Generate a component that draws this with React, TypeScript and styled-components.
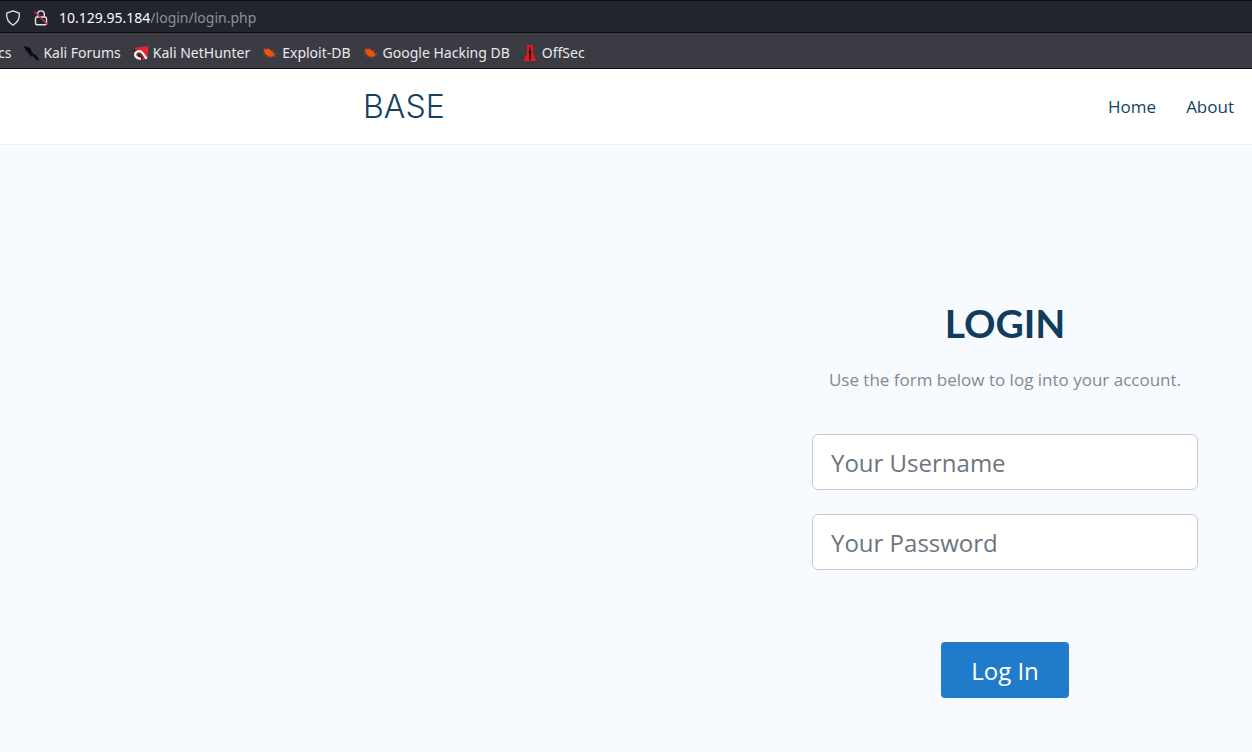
import React from 'react';
import styled, { createGlobalStyle } from 'styled-components';

const GlobalStyle = createGlobalStyle`
  *, *::before, *::after { box-sizing: border-box; }
  body {
    margin: 0;
    background: #f7faff;
    font-family: "Open Sans", sans-serif;
    font-size: 16px;
  }
`;

const Page = styled.div`
  display: flex;
  flex-direction: column;
  min-height: 100vh;
`;

const AddressBar = styled.div`
  display: flex;
  align-items: center;
  height: 33px;
  padding: 2px 5px 0;
  border-top: 1px solid #0c0c0d;
  border-bottom: 1px solid #0c0c0d;
  background: #23252e;
  color: #fbfbfe;
  font: 14px/20px "Noto Sans", sans-serif;
`;

const AddressIcon = styled.svg`
  flex: none;
  width: 16px;
  height: 16px;
  margin-right: 12px;
`;

const Url = styled.span`
  margin-left: -2px;
  white-space: nowrap;
`;

const UrlPath = styled.span`
  color: #8f9095;
`;

const BookmarksBar = styled.nav`
  display: flex;
  align-items: center;
  gap: 12px;
  height: 36px;
  padding-top: 4px;
  border-bottom: 1px solid #0c0c0d;
  background: #3b3b43;
  overflow: hidden;
`;

const Bookmark = styled.a`
  display: flex;
  align-items: center;
  gap: 4px;
  color: #e9e9ec;
  font: 14px/20px "Noto Sans", sans-serif;
  text-decoration: none;
  white-space: nowrap;

  &:first-child { margin-left: -2px; }
`;

const BookmarkIcon = styled.svg`
  flex: none;
  width: 16px;
  height: 16px;
`;

const SiteHeader = styled.header`
  display: flex;
  align-items: center;
  justify-content: space-between;
  height: 76px;
  padding: 0 18px 0 29%;
  border-bottom: 1px solid #e1f0fa;
  background: #fff;
`;

const Brand = styled.a`
  color: #124265;
  font: 300 32px/40px Inter, sans-serif;
  text-decoration: none;
`;

const SiteNav = styled.nav`
  display: flex;
  gap: 30px;
`;

const NavLink = styled.a`
  color: #124265;
  font-size: 17px;
  line-height: 24px;
  text-decoration: none;
`;

const Main = styled.main`
  display: flex;
  flex: 1;
  justify-content: flex-end;
  padding: 155px 54px 54px;
`;

const LoginForm = styled.form`
  display: flex;
  flex-direction: column;
  align-items: center;
  width: 386px;
`;

const Title = styled.h1`
  margin: 0 0 22px;
  color: #123c5d;
  font: 700 39px/46px Lato, sans-serif;
`;

const Intro = styled.p`
  margin: 0 0 42px;
  color: #86898d;
  font-size: 17px;
  line-height: 24px;
  white-space: nowrap;
`;

const Field = styled.input`
  width: 100%;
  height: 56px;
  margin-bottom: 24px;
  padding: 1px 18px 0;
  border: 1px solid #c5cad3;
  border-radius: 6px;
  background: #fff;
  color: #495057;
  font: 24px/36px "Open Sans", sans-serif;
  &::placeholder { color: #6c757d; opacity: 1; }
`;

const SubmitButton = styled.button`
  height: 56px;
  margin-top: 48px;
  padding: 1px 30px 0;
  border: 0;
  border-radius: 4px;
  background: #207cca;
  color: #fff;
  font: 24px/36px "Open Sans", sans-serif;
`;

const ShieldIcon = () => (
  <AddressIcon viewBox="0 0 16 16" fill="none" stroke="#e4e4e8" strokeWidth="1.3" strokeLinejoin="round" aria-hidden="true">
    <path d="M8 .8 14.3 3.2c.4 4.8-1.3 9-6.3 12C3 12.200 1.300 8 1.700 3.200Z" />
  </AddressIcon>
);

const InsecureIcon = () => (
  <AddressIcon viewBox="0 0 16 16" fill="none" stroke="#e4e4e8" strokeWidth="1.4" aria-hidden="true">
    <path d="M4.700 7V4.200a3.300 3.300 0 0 1 6.600 0V7M4 7h8a1.500 1.500 0 0 1 1.500 1.500v4.800a1.500 1.500 0 0 1-1.500 1.500H4a1.500 1.500 0 0 1-1.500-1.500V8.500A1.500 1.500 0 0 1 4 7Z" />
    <path d="M1.500 1.500 14.500 14.500" stroke="#e22850" />
  </AddressIcon>
);

const ForumsIcon = () => (
  <BookmarkIcon viewBox="0 0 16 16" aria-hidden="true">
    <path fill="#08080a" d="M0 1.300 5 2l2.200 1.600 1.500 3.100 2.100 2.800 2.200.6 2.700 4.400.3 1.200-3.100-1.200-2.300-2.700-2.500-1L6 8.300 3.500 7.500l1.200-1L1.500 4.200l1.300-.1Z" />
    <path d="M6 9 8 12M3 4l4 3 3 4" stroke="#151519" fill="none" />
  </BookmarkIcon>
);

const NetHunterIcon = () => (
  <BookmarkIcon viewBox="0 0 16 16" aria-hidden="true">
    <path fill="#e5242b" d="M2 2.500 15.500 1.200 14.800 13 10 15 2 6Z" />
    <path fill="#17171b" d="M.5 5.500 4 4.500 10 7l1.500 4L8 15Z" />
    <path d="M8 13.500c-3 .4-6-1.500-5.800-4.200.2-3 4.700-4.200 7.100-1.600 1.700 1.900 2.500 4.100 4.500 6" fill="none" stroke="#fff" strokeWidth="2.300" />
    <path d="M4.500 11c-.2-2.300 2-2.700 3.500-1l2 2.500" fill="none" stroke="#c91b29" strokeWidth="1.300" />
  </BookmarkIcon>
);

const BugIcon = () => (
  <BookmarkIcon viewBox="0 0 16 16" aria-hidden="true">
    <path fill="#ea5411" d="M2 4.500c2-1.300 5-.6 7 1 2.200 1.200 3.400 2.800 3.400 5.500-1.800 1-4.700 1.200-6.700-.1C3.500 9.500 1.700 7.500 2 4.500Z" />
    <path d="M4 5 2.500 3.500M7 5V2.700M10 6.500l2-2M11.500 8.500l3.300-.3M12 10.500l2.200 1M4 9 1 9.300M6 11l-2 1.500M9 11.500l.5 2M2.500 6.500.8 5.800" fill="none" stroke="#b9481b" strokeWidth=".8" />
  </BookmarkIcon>
);

const OffSecIcon = () => (
  <BookmarkIcon viewBox="0 0 16 16" aria-hidden="true">
    <path fill="#e3191f" d="M5 0h6v8.500l3.500 7.500h-13L5 8.500Z" />
    <path fill="#1b0c10" d="m8 1 .7 3-.2 1.500 1 1-.5 1.500h-.3l.5 5L8 15.500l-1.200-2.500.5-5H7l-.5-1.500 1-1L7.300 4Z" />
  </BookmarkIcon>
);

const bookmarks = [
  { label: 'Kali Forums', Icon: ForumsIcon },
  { label: 'Kali NetHunter', Icon: NetHunterIcon },
  { label: 'Exploit-DB', Icon: BugIcon },
  { label: 'Google Hacking DB', Icon: BugIcon },
  { label: 'OffSec', Icon: OffSecIcon },
];

export default function App() {
  return (
    <>
      <GlobalStyle />
      <Page>
        <AddressBar>
          <ShieldIcon />
          <InsecureIcon />
          <Url>10.129.95.184<UrlPath>/login/login.php</UrlPath></Url>
        </AddressBar>
        <BookmarksBar aria-label="Bookmarks">
          <Bookmark href="#">cs</Bookmark>
          {bookmarks.map(({ label, Icon }) => (
            <Bookmark href="#" key={label}><Icon />{label}</Bookmark>
          ))}
        </BookmarksBar>
        <SiteHeader>
          <Brand href="#">BASE</Brand>
          <SiteNav aria-label="Main">
            <NavLink href="#">Home</NavLink>
            <NavLink href="#">About</NavLink>
          </SiteNav>
        </SiteHeader>
        <Main>
          <LoginForm onSubmit={(event) => event.preventDefault()}>
            <Title>LOGIN</Title>
            <Intro>Use the form below to log into your account.</Intro>
            <Field type="text" name="username" placeholder="Your Username" aria-label="Your Username" />
            <Field type="password" name="password" placeholder="Your Password" aria-label="Your Password" />
            <SubmitButton type="submit">Log In</SubmitButton>
          </LoginForm>
        </Main>
      </Page>
    </>
  );
}
